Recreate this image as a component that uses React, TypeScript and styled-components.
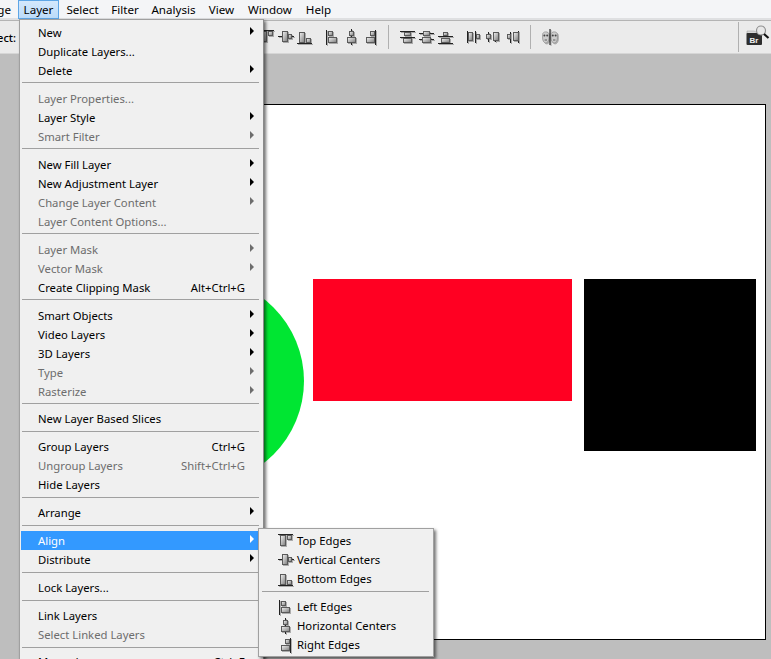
import React, { useId } from "react";
import styled, { createGlobalStyle } from "styled-components";

const Global = createGlobalStyle`
  html, body { margin: 0; padding: 0; background: #bebebe; }
  body { font-family: "Noto Sans", "Liberation Sans", sans-serif; font-size: 11px; color: #000; }
`;

const Page = styled.div`
  position: relative;
  width: 771px;
  height: 659px;
  overflow: hidden;
  display: flex;
  flex-direction: column;
`;

const MenuBar = styled.div`
  display: flex;
  height: 18px;
  background: #f4f5f7;
  border-bottom: 2px solid #dfe0e2;
  box-sizing: content-box;
  line-height: 19px;
  font-size: 11.6px;
  flex: none;
`;

const BarItem = styled.div<{ $open?: boolean; $w: number }>`
  width: ${(p) => p.$w}px;
  height: ${(p) => (p.$open ? 19 : 18)}px;
  box-sizing: border-box;
  flex: none;
  text-align: center;
  white-space: nowrap;
  overflow: hidden;
  ${(p) =>
    p.$open
      ? "background: linear-gradient(#d4e8fc, #bcdcfa); border: 1px solid #5ea6e6; line-height: 17px;"
      : ""}
`;

const ClippedBarItem = styled.div`
  width: 18px;
  height: 18px;
  flex: none;
  display: flex;
  justify-content: flex-end;
  padding-right: 7px;
  box-sizing: border-box;
  overflow: hidden;
  white-space: nowrap;
`;

const Toolbar = styled.div`
  display: flex;
  align-items: center;
  height: 32px;
  background: #ebebeb;
  border-top: 1px solid #b4b4b4;
  border-bottom: 1px solid #d6d6d6;
  flex: none;
`;

const ToolLabel = styled.div`
  width: 16px;
  flex: none;
  display: flex;
  justify-content: flex-end;
  overflow: hidden;
  white-space: nowrap;
  font-size: 11px;
  font-weight: 500;
`;

const IconGroup = styled.div<{ $ml: number }>`
  display: flex;
  gap: 3px;
  margin-left: ${(p) => p.$ml}px;
  flex: none;
`;

const ToolDivider = styled.div<{ $ml: number; $tall?: boolean }>`
  width: 1px;
  height: ${(p) => (p.$tall ? 30 : 24)}px;
  background: #b0b0b0;
  margin-left: ${(p) => p.$ml}px;
  flex: none;
`;

const IconSvg = styled.svg`
  display: block;
  flex: none;
  filter: drop-shadow(1px 1px 0.6px rgba(0, 0, 0, 0.28));
`;

const Workspace = styled.div`
  flex: 1;
  background: #bebebe;
  padding: 50px 0 0 30px;
  min-height: 0;
`;

const Doc = styled.div`
  position: relative;
  width: 736px;
  height: 536px;
  box-sizing: border-box;
  background: #fff;
  border: 1px solid #000;
`;

const Shape = styled.div<{ $x: number; $y: number; $w: number; $h: number; $c: string; $round?: boolean }>`
  position: absolute;
  left: ${(p) => p.$x - 31}px;
  top: ${(p) => p.$y - 105}px;
  width: ${(p) => p.$w}px;
  height: ${(p) => p.$h}px;
  background: ${(p) => p.$c};
  border-radius: ${(p) => (p.$round ? "50%" : "0")};
`;

const Menu = styled.div`
  position: absolute;
  left: 19px;
  top: 19px;
  width: 245px;
  box-sizing: border-box;
  background: #f0f0f0;
  border: 1px solid #a0a0a0;
  border-right-color: #8a8a8a;
  padding: 3px 1px 0;
  box-shadow: 2px 2px 3px rgba(0, 0, 0, 0.55);
`;

const SubMenu = styled.div`
  position: absolute;
  left: 258px;
  top: 528px;
  width: 176px;
  box-sizing: border-box;
  background: #f0f0f0;
  border: 1px solid #a0a0a0;
  padding: 2px 1px 2px;
  box-shadow: 2px 2px 3px rgba(0, 0, 0, 0.55);
`;

const Row = styled.div<{ $disabled?: boolean; $active?: boolean }>`
  display: flex;
  align-items: center;
  height: 19px;
  padding-left: 17px;
  font-size: 11.3px;
  white-space: nowrap;
  color: ${(p) => (p.$active ? "#fff" : p.$disabled ? "#6d6d6d" : "#000")};
  background: ${(p) => (p.$active ? "#3399ff" : "transparent")};
`;

const Label = styled.span`
  flex: 1;
`;

const Shortcut = styled.span`
  width: 100px;
  text-align: right;
  margin-right: 17px;
`;

const Arrow = styled.span<{ $disabled?: boolean; $active?: boolean }>`
  width: 0;
  height: 0;
  margin-right: 8px;
  border-top: 4px solid transparent;
  border-bottom: 4px solid transparent;
  border-left: 4px solid ${(p) => (p.$active ? "#fff" : p.$disabled ? "#6d6d6d" : "#000")};
  position: relative;
  top: -2px;
`;

const Separator = styled.div<{ $h: number; $top: number }>`
  height: ${(p) => p.$h}px;
  box-sizing: border-box;
  padding-top: ${(p) => p.$top}px;
  margin: 0 3px 0 1px;
  &::after {
    content: "";
    display: block;
    height: 1px;
    background: #a0a0a0;
  }
`;

const SubRow = styled.div`
  display: flex;
  align-items: center;
  height: 19px;
  gap: 3px;
  padding-left: 18px;
  font-size: 11.3px;
  white-space: nowrap;
`;

const SubSeparator = styled.div`
  height: 9px;
  padding-top: 3px;
  box-sizing: border-box;
  margin: 0 3px 0 2px;
  &::after {
    content: "";
    display: block;
    height: 1px;
    background: #a0a0a0;
  }
`;

type R = [number, number, number, number];
type L = [number, number, number, number];
const ICONS: Record<string, { lines: L[]; rects: R[] }> = {
  top: { lines: [[0, 1.5, 15, 1.5]], rects: [[2.5, 2.5, 5, 10], [9.5, 2.5, 4, 4]] },
  vcenter: { lines: [[0, 7.5, 16, 7.5]], rects: [[4.5, 2.5, 5, 10], [10.5, 5.5, 3, 4]] },
  bottom: { lines: [[0, 14.5, 15, 14.5]], rects: [[2.5, 3.5, 5, 10], [9.5, 9.5, 4, 4]] },
  left: { lines: [[1.5, 1, 1.5, 16]], rects: [[3.5, 2.5, 4, 4], [3.5, 8.5, 8, 5]] },
  hcenter: { lines: [[7.5, 0, 7.5, 16]], rects: [[5.5, 2.5, 4, 4], [3.5, 8.5, 8, 5]] },
  right: { lines: [[12.5, 1, 12.5, 16]], rects: [[7.5, 2.5, 4, 4], [3.5, 8.5, 8, 5]] },
  dtop: { lines: [[0, 2.5, 15, 2.5], [0, 8.5, 15, 8.5]], rects: [[4.5, 3.5, 6, 3], [3.5, 9.5, 8, 4]] },
  dvcenter: { lines: [[0, 4.5, 15, 4.5], [0, 10.5, 15, 10.5]], rects: [[4.5, 2.5, 6, 4], [3.5, 8.5, 8, 5]] },
  dbottom: { lines: [[0, 7.5, 15, 7.5], [0, 14.5, 15, 14.5]], rects: [[5.5, 3.5, 4, 3], [3.5, 9.5, 8, 4]] },
  dleft: { lines: [[1.5, 2, 1.5, 14], [9.5, 2, 9.5, 14]], rects: [[2.5, 3.5, 4, 8], [10.5, 5.5, 3, 4]] },
  dhcenter: { lines: [[3.5, 3, 3.5, 13], [10.5, 3, 10.5, 13]], rects: [[1.5, 5.5, 4, 4], [8.5, 3.5, 5, 8]] },
  dright: { lines: [[6.5, 3, 6.5, 14], [14.5, 2, 14.5, 14]], rects: [[3.5, 5.5, 3, 4], [9.5, 3.5, 5, 8]] },
};

function AlignIcon({ kind }: { kind: string }) {
  const id = useId();
  const { lines, rects } = ICONS[kind];
  return (
    <IconSvg width={16} height={16} viewBox="0 0 16 16">
      <defs>
        <linearGradient id={id} x1="0" y1="0" x2="1" y2="1">
          <stop offset="0" stopColor="#f4f4f4" />
          <stop offset="1" stopColor="#7c7c7c" />
        </linearGradient>
      </defs>
      {lines.map((l, i) => (
        <line key={i} x1={l[0]} y1={l[1]} x2={l[2]} y2={l[3]} stroke="#222" strokeWidth={1} />
      ))}
      {rects.map((r, i) => (
        <rect key={i} x={r[0]} y={r[1]} width={r[2]} height={r[3]} fill={`url(#${id})`} stroke="#5a5a5a" strokeWidth={1} />
      ))}
    </IconSvg>
  );
}

function AutoBlendIcon() {
  return (
    <IconSvg width={16} height={16} viewBox="0 0 16 16">
      {[3.8, 12.2].map((cx) => (
        <g key={cx}>
          <path
            d={`M${cx - 3.2} 5.5C${cx - 3.2} 2 ${cx + 3.2} 2 ${cx + 3.2} 5.5V9C${cx + 3.2} 12 ${cx + 1.5} 14 ${cx} 14C${cx - 1.5} 14 ${cx - 3.2} 12 ${cx - 3.2} 9Z`}
            fill="#cdcdcd"
            stroke="#909090"
            strokeWidth={0.8}
          />
          <circle cx={cx - 1.4} cy={6.5} r={1} fill="#444" />
          <circle cx={cx + 1.4} cy={6.5} r={1} fill="#444" />
          <path d={`M${cx - 1.2} 11h2.4`} stroke="#555" strokeWidth={0.9} />
        </g>
      ))}
      <line x1={8} y1={0} x2={8} y2={16} stroke="#000" />
    </IconSvg>
  );
}

const BrText = styled.text`
  font-family: "Liberation Sans", sans-serif;
  font-size: 8px;
  font-weight: 700;
  fill: #f0f0f0;
`;

const BrSvg = styled.svg`
  display: block;
  flex: none;
`;

function BridgeIcon() {
  return (
    <BrSvg width={24} height={24} viewBox="0 2 24 24">
      <path d="M1 8h7l2 1h9v2H1z" fill="#d8d8d8" stroke="#9a9a9a" strokeWidth={0.5} />
      <rect x={0.5} y={10} width={15.5} height={12} fill="#2e2e2e" rx={1} />
      <BrText x={3.5} y={19.5}>Br</BrText>
      <circle cx={15} cy={7.5} r={4.5} fill="#e8e8e8" stroke="#8f8f8f" strokeWidth={1.2} />
      <path d="M18 11l4.5 4" stroke="#111" strokeWidth={2.2} />
    </BrSvg>
  );
}

const BrWrap = styled.div`
  margin-left: 7px;
  flex: none;
`;

type Item =
  | { sep: [number, number] }
  | { t: string; d?: boolean; a?: boolean; k?: string; on?: boolean };

const ITEMS: Item[] = [
  { t: "New", a: true },
  { t: "Duplicate Layers..." },
  { t: "Delete", a: true },
  { sep: [9, 2] },
  { t: "Layer Properties...", d: true },
  { t: "Layer Style", a: true },
  { t: "Smart Filter", d: true, a: true },
  { sep: [9, 2] },
  { t: "New Fill Layer", a: true },
  { t: "New Adjustment Layer", a: true },
  { t: "Change Layer Content", d: true, a: true },
  { t: "Layer Content Options...", d: true },
  { sep: [9, 2] },
  { t: "Layer Mask", d: true, a: true },
  { t: "Vector Mask", d: true, a: true },
  { t: "Create Clipping Mask", k: "Alt+Ctrl+G" },
  { sep: [9, 2] },
  { t: "Smart Objects", a: true },
  { t: "Video Layers", a: true },
  { t: "3D Layers", a: true },
  { t: "Type", d: true, a: true },
  { t: "Rasterize", d: true, a: true },
  { sep: [8, 2] },
  { t: "New Layer Based Slices" },
  { sep: [9, 3] },
  { t: "Group Layers", k: "Ctrl+G" },
  { t: "Ungroup Layers", d: true, k: "Shift+Ctrl+G" },
  { t: "Hide Layers" },
  { sep: [9, 3] },
  { t: "Arrange", a: true },
  { sep: [9, 3] },
  { t: "Align", a: true, on: true },
  { t: "Distribute", a: true },
  { sep: [9, 3] },
  { t: "Lock Layers..." },
  { sep: [9, 3] },
  { t: "Link Layers" },
  { t: "Select Linked Layers", d: true },
  { sep: [8, 3] },
  { t: "Merge Layers", k: "Ctrl+E" },
];

const SUB_A = [
  ["top", "Top Edges"],
  ["vcenter", "Vertical Centers"],
  ["bottom", "Bottom Edges"],
];
const SUB_B = [
  ["left", "Left Edges"],
  ["hcenter", "Horizontal Centers"],
  ["right", "Right Edges"],
];

export default function App() {
  return (
    <Page>
      <Global />
      <MenuBar>
        <ClippedBarItem>Image</ClippedBarItem>
        <BarItem $open $w={41}>Layer</BarItem>
        <BarItem $w={47}>Select</BarItem>
        <BarItem $w={38}>Filter</BarItem>
        <BarItem $w={59}>Analysis</BarItem>
        <BarItem $w={37}>View</BarItem>
        <BarItem $w={60}>Window</BarItem>
        <BarItem $w={37}>Help</BarItem>
      </MenuBar>
      <Toolbar>
        <ToolLabel>Auto-Select:</ToolLabel>
        <IconGroup $ml={243}>
          <AlignIcon kind="top" />
          <AlignIcon kind="vcenter" />
          <AlignIcon kind="bottom" />
        </IconGroup>
        <IconGroup $ml={12}>
          <AlignIcon kind="left" />
          <AlignIcon kind="hcenter" />
          <AlignIcon kind="right" />
        </IconGroup>
        <ToolDivider $ml={9} />
        <IconGroup $ml={11}>
          <AlignIcon kind="dtop" />
          <AlignIcon kind="dvcenter" />
          <AlignIcon kind="dbottom" />
        </IconGroup>
        <IconGroup $ml={12}>
          <AlignIcon kind="dleft" />
          <AlignIcon kind="dhcenter" />
          <AlignIcon kind="dright" />
        </IconGroup>
        <ToolDivider $ml={10} />
        <IconGroup $ml={11}>
          <AutoBlendIcon />
        </IconGroup>
        <ToolDivider $ml={180} $tall />
        <BrWrap>
          <BridgeIcon />
        </BrWrap>
      </Toolbar>
      <Workspace>
        <Doc>
          <Shape $x={96} $y={277} $w={208} $h={208} $c="#00e632" $round />
          <Shape $x={313} $y={279} $w={259} $h={122} $c="#ff0022" />
          <Shape $x={584} $y={279} $w={172} $h={172} $c="#000" />
        </Doc>
      </Workspace>
      <Menu>
        {ITEMS.map((it, i) =>
          "sep" in it ? (
            <Separator key={i} $h={it.sep[0]} $top={it.sep[1]} />
          ) : (
            <Row key={i} $disabled={it.d} $active={it.on}>
              <Label>{it.t}</Label>
              {it.k && <Shortcut>{it.k}</Shortcut>}
              {it.a && <Arrow $disabled={it.d} $active={it.on} />}
            </Row>
          )
        )}
      </Menu>
      <SubMenu>
        {SUB_A.map(([k, t]) => (
          <SubRow key={k}>
            <AlignIcon kind={k} />
            <span>{t}</span>
          </SubRow>
        ))}
        <SubSeparator />
        {SUB_B.map(([k, t]) => (
          <SubRow key={k}>
            <AlignIcon kind={k} />
            <span>{t}</span>
          </SubRow>
        ))}
      </SubMenu>
    </Page>
  );
}
